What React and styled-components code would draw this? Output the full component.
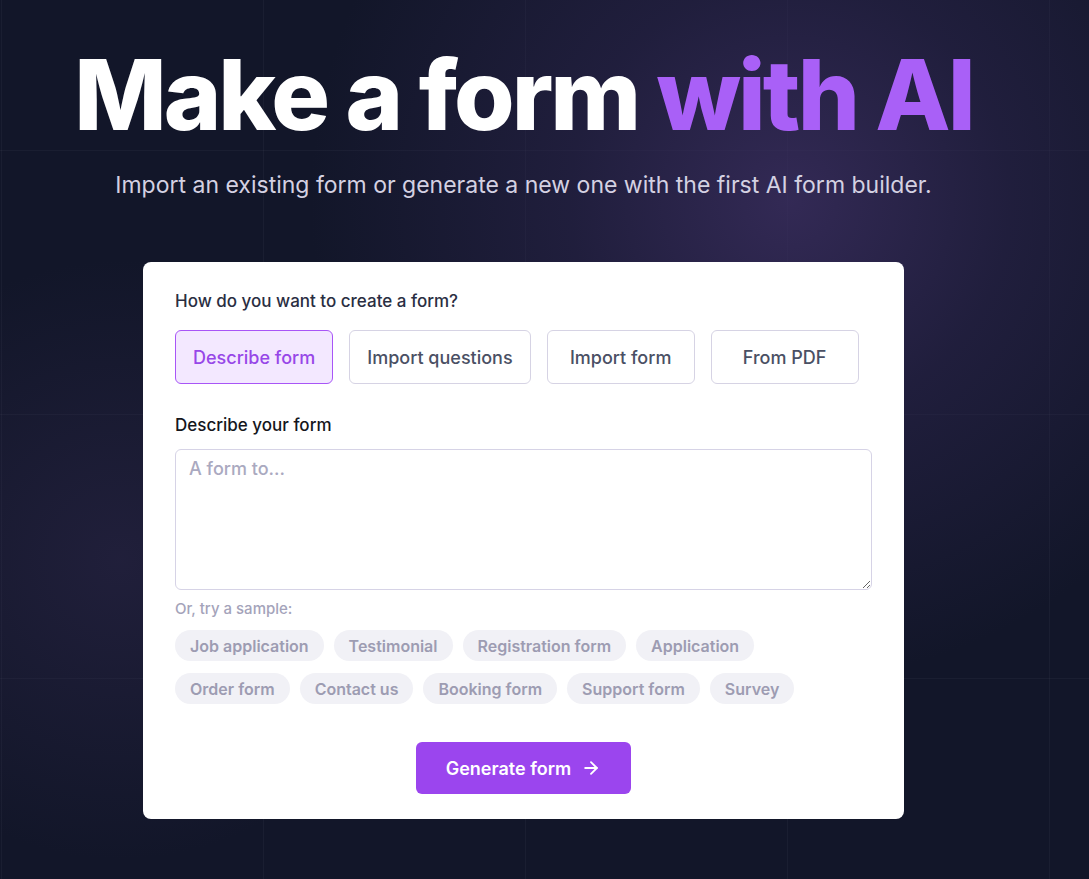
import React from "react";
import styled, { createGlobalStyle } from "styled-components";

const GlobalStyle = createGlobalStyle`
  html, body {
    margin: 0;
    padding: 0;
    background: #121629;
  }
  body {
    font-family: Inter, "Liberation Sans", sans-serif;
    -webkit-font-smoothing: antialiased;
  }
  * { box-sizing: border-box; }
`;

const methods = ["Describe form", "Import questions", "Import form", "From PDF"];
const samples = [
  ["Job application", "Testimonial", "Registration form", "Application"],
  ["Order form", "Contact us", "Booking form", "Support form", "Survey"],
];

const ArrowRight = () => (
  <svg width="20" height="20" viewBox="0 0 24 24" fill="none" stroke="currentColor" strokeWidth="2.2" strokeLinecap="round" strokeLinejoin="round">
    <path d="M5 12h14" />
    <path d="M12 5l7 7-7 7" />
  </svg>
);

const App = () => {
  const [active, setActive] = React.useState(0);

  return (
    <Page>
      <GlobalStyle />
      <Hero>
        <Title>
          Make a form <Accent>with AI</Accent>
        </Title>
        <Subtitle>
          Import an existing form or generate a new one with the first AI form builder.
        </Subtitle>
      </Hero>

      <Card>
        <Question>How do you want to create a form?</Question>
        <MethodRow>
          {methods.map((m, i) => (
            <MethodButton key={m} $active={i === active} onClick={() => setActive(i)}>
              {m}
            </MethodButton>
          ))}
        </MethodRow>

        <Label>Describe your form</Label>
        <TextArea placeholder="A form to..." />
        <Hint>Or, try a sample:</Hint>

        <Samples>
          {samples.map((row, r) => (
            <ChipRow key={r}>
              {row.map((s) => (
                <Chip key={s}>{s}</Chip>
              ))}
            </ChipRow>
          ))}
        </Samples>

        <Footer>
          <Generate>
            Generate form <ArrowRight />
          </Generate>
        </Footer>
      </Card>
    </Page>
  );
};

const Page = styled.div`
  width: 1089px;
  height: 879px;
  overflow: hidden;
  padding-right: 42px;
  background:
    radial-gradient(circle at 790px 200px, rgba(62, 48, 100, 0.75) 0, rgba(46, 38, 80, 0.5) 220px, rgba(18, 22, 41, 0) 480px),
    radial-gradient(circle at 120px 560px, rgba(50, 42, 80, 0.45) 0, rgba(18, 22, 41, 0) 300px),
    linear-gradient(rgba(255, 255, 255, 0.035) 1px, transparent 1px) 0 -114px / 262px 264px,
    linear-gradient(90deg, rgba(255, 255, 255, 0.035) 1px, transparent 1px) 1px 0 / 262px 264px,
    #121629;
  display: flex;
  flex-direction: column;
  align-items: center;
`;

const Hero = styled.div`
  display: flex;
  flex-direction: column;
  align-items: center;
  padding-top: 38px;
`;

const Title = styled.h1`
  margin: 0;
  font-family: Inter, "Liberation Sans", sans-serif;
  font-weight: 800;
  font-size: 98px;
  line-height: 114px;
  letter-spacing: -3px;
  color: #ffffff;
`;

const Accent = styled.span`
  color: #a960f7;
`;

const Subtitle = styled.p`
  margin: 18px 0 0;
  font-size: 23px;
  line-height: 30px;
  color: #d4d1e2;
  font-weight: 400;
`;

const Card = styled.div`
  margin-top: 62px;
  width: 761px;
  background: #ffffff;
  border-radius: 8px;
  padding: 28px 32px 25px;
  display: flex;
  flex-direction: column;
`;

const Question = styled.div`
  font-size: 17px;
  line-height: 22px;
  font-weight: 500;
  color: #2a2e42;
`;

const MethodRow = styled.div`
  display: flex;
  gap: 16px;
  margin-top: 18px;
`;

const MethodButton = styled.button`
  height: 54px;
  min-width: 148px;
  padding: 0 17px;
  border-radius: 6px;
  font-family: inherit;
  font-size: 18px;
  font-weight: 500;
  cursor: pointer;
  border: 1px solid ${(p) => (p.$active ? "#a855f7" : "#d6d3e4")};
  background: ${(p) => (p.$active ? "#f3e8ff" : "#ffffff")};
  color: ${(p) => (p.$active ? "#9747e8" : "#4a5064")};
`;

const Label = styled.div`
  margin-top: 30px;
  font-size: 17px;
  line-height: 22px;
  font-weight: 500;
  color: #15161c;
`;

const TextArea = styled.textarea`
  margin-top: 13px;
  width: 100%;
  height: 141px;
  border: 1.5px solid #d6d3e6;
  border-radius: 6px;
  padding: 8px 13px;
  font-family: inherit;
  font-size: 18px;
  font-weight: 500;
  color: #2a2e42;
  resize: vertical;
  outline: none;
  &::placeholder {
    color: #aaa9c0;
  }
`;

const Hint = styled.div`
  margin-top: 9px;
  font-size: 15px;
  line-height: 20px;
  font-weight: 500;
  color: #a4a3ba;
`;

const Samples = styled.div`
  margin-top: 11px;
  display: flex;
  flex-direction: column;
  gap: 12px;
`;

const ChipRow = styled.div`
  display: flex;
  gap: 10px;
`;

const Chip = styled.button`
  height: 31px;
  padding: 0 15px;
  border: none;
  border-radius: 16px;
  background: #f1f1f6;
  font-family: inherit;
  font-size: 16px;
  font-weight: 600;
  color: #9d9cb2;
  cursor: pointer;
`;

const Footer = styled.div`
  display: flex;
  justify-content: center;
  margin-top: 38px;
`;

const Generate = styled.button`
  display: flex;
  align-items: center;
  gap: 10px;
  height: 52px;
  padding: 0 30px;
  border: none;
  border-radius: 6px;
  background: #9b45ee;
  color: #ffffff;
  font-family: inherit;
  font-size: 18px;
  font-weight: 600;
  cursor: pointer;
`;

export default App;
